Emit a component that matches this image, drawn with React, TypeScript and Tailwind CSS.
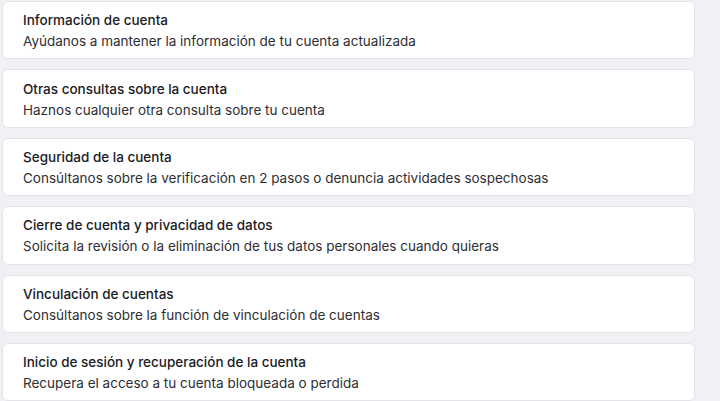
import React from 'react';

const topics = [
  { title: 'Información de cuenta', desc: 'Ayúdanos a mantener la información de tu cuenta actualizada' },
  { title: 'Otras consultas sobre la cuenta', desc: 'Haznos cualquier otra consulta sobre tu cuenta' },
  { title: 'Seguridad de la cuenta', desc: 'Consúltanos sobre la verificación en 2 pasos o denuncia actividades sospechosas' },
  { title: 'Cierre de cuenta y privacidad de datos', desc: 'Solicita la revisión o la eliminación de tus datos personales cuando quieras' },
  { title: 'Vinculación de cuentas', desc: 'Consúltanos sobre la función de vinculación de cuentas' },
  { title: 'Inicio de sesión y recuperación de la cuenta', desc: 'Recupera el acceso a tu cuenta bloqueada o perdida' },
];

export default function App() {
  return (
    <div className="min-h-screen bg-[#f0f1f4] pl-[2px] pt-[1px] font-['Inter',sans-serif]">
      <div className="flex w-[693px] flex-col gap-[10px]">
        {topics.map((t) => (
          <div
            key={t.title}
            className="flex h-[58.4px] cursor-pointer flex-col justify-center rounded-md border border-[#e3e4e8] bg-white px-[20px] pt-[2px]"
          >
            <h3 className="text-[13.5px] font-medium leading-[21px] text-[#1b1b1f]">{t.title}</h3>
            <p className="text-[13.5px] leading-[21px] text-[#2e2e33]">{t.desc}</p>
          </div>
        ))}
      </div>
    </div>
  );
}
